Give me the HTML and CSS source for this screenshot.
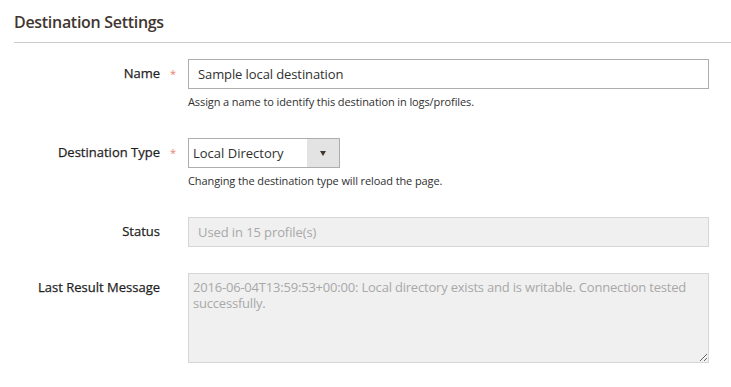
FILE: index.html
```html
<!DOCTYPE html>
<html>
<head>
  <title>Destination Settings</title>
  <link rel="stylesheet" href="styles.css">
</head>
<body>
  <div class="fieldset">
    <h2 class="legend">Destination Settings</h2>

    <div class="field">
      <label class="field-label" for="name">Name</label>
      <span class="required-mark">*</span>
      <div class="control">
        <input type="text" id="name" class="input-text" value="Sample local destination">
        <div class="note">Assign a name to identify this destination in logs/profiles.</div>
      </div>
    </div>

    <div class="field">
      <label class="field-label" for="type">Destination Type</label>
      <span class="required-mark">*</span>
      <div class="control">
        <div class="select">
          <span class="select-value">Local Directory</span>
          <span class="select-arrow"></span>
        </div>
        <div class="note">Changing the destination type will reload the page.</div>
      </div>
    </div>

    <div class="field field-short">
      <label class="field-label" for="status">Status</label>
      <span class="required-mark"></span>
      <div class="control">
        <input type="text" id="status" class="input-text" value="Used in 15 profile(s)" disabled>
      </div>
    </div>

    <div class="field">
      <label class="field-label" for="message">Last Result Message</label>
      <span class="required-mark"></span>
      <div class="control">
        <textarea id="message" class="textarea" disabled>2016-06-04T13:59:53+00:00: Local directory exists and is writable. Connection tested successfully.</textarea>
      </div>
    </div>
  </div>
</body>
</html>
```

FILE: styles.css
```css
body {
  font-family: 'Open Sans', 'Liberation Sans', sans-serif;
  background-color: #fff;
  color: #303030;
  margin: 0;
  padding: 0;
}
.fieldset {
  padding: 11px 0 0 14px;
}
.legend {
  font-size: 16px;
  font-weight: 600;
  letter-spacing: -0.3px;
  color: #41362f;
  margin: 0 0 16px 0;
  padding-bottom: 9px;
  border-bottom: 1px solid #cccccc;
  line-height: 22px;
}
.field {
  display: grid;
  grid-template-columns: 146px 28px 521px;
  margin-bottom: 28px;
}
.field-short {
  margin-bottom: 26px;
}
.field-label {
  text-align: right;
  font-size: 13px;
  font-weight: 400;
  color: #1f1f1f;
  padding-top: 5px;
  line-height: 18px;
  -webkit-text-stroke: 0.25px #1f1f1f;
}
.required-mark {
  color: #e8826a;
  font-size: 11px;
  padding-top: 6px;
  padding-left: 10px;
  line-height: 18px;
}
.input-text {
  display: block;
  box-sizing: border-box;
  width: 100%;
  height: 30px;
  margin: 0;
  padding: 0 9px;
  border: 1px solid #adadad;
  font-family: inherit;
  font-size: 13px;
  letter-spacing: -0.1px;
  color: #303030;
  background: #fff;
}
.input-text:disabled {
  background-color: #f0f0f0;
  border-color: #d6d6d6;
  color: #a8a8a8;
}
.select {
  display: flex;
  box-sizing: border-box;
  width: 152px;
  height: 30px;
  border: 1px solid #adadad;
  font-size: 13px;
  color: #303030;
}
.select-value {
  flex: 1;
  padding: 0 4px;
  line-height: 28px;
}
.select-arrow {
  width: 32px;
  background-color: #e3e3e3;
  position: relative;
}
.select-arrow::after {
  content: '';
  position: absolute;
  left: 13px;
  top: 12px;
  border-left: 3px solid transparent;
  border-right: 3px solid transparent;
  border-top: 5px solid #41362f;
}
.note {
  font-size: 11px;
  letter-spacing: -0.1px;
  color: #303030;
  margin-top: 4px;
  line-height: 17px;
}
.textarea {
  display: block;
  box-sizing: border-box;
  width: 100%;
  height: 90px;
  margin: 0;
  padding: 5px 4px;
  border: 1px solid #d6d6d6;
  background-color: #f0f0f0;
  color: #a8a8a8;
  font-family: inherit;
  font-size: 13px;
  letter-spacing: -0.2px;
  line-height: 16px;
  resize: vertical;
}
```
